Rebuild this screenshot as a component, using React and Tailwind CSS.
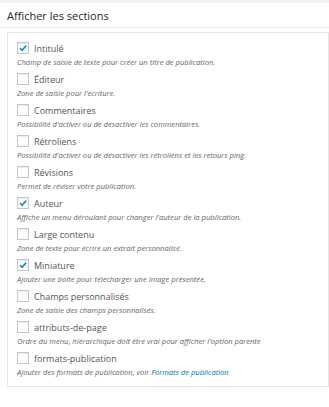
const items = [
  { label: 'Intitulé', desc: 'Champ de saisie de texte pour créer un titre de publication.', checked: true },
  { label: 'Éditeur', desc: "Zone de saisie pour l'écriture." },
  { label: 'Commentaires', desc: "Possibilité d'activer ou de désactiver les commentaires." },
  { label: 'Rétroliens', desc: "Possibilité d'activer ou de désactiver les rétroliens et les retours ping." },
  { label: 'Révisions', desc: 'Permet de réviser votre publication.' },
  { label: 'Auteur', desc: "Affiche un menu déroulant pour changer l'auteur de la publication.", checked: true },
  { label: 'Large contenu', desc: 'Zone de texte pour écrire un extrait personnalisé.' },
  { label: 'Miniature', desc: 'Ajouter une boîte pour télécharger une image présentée.', checked: true },
  { label: 'Champs personnalisés', desc: 'Zone de saisie des champs personnalisés.' },
  { label: 'attributs-de-page', desc: "Ordre du menu, hiérarchique doit être vrai pour afficher l'option parente" },
  { label: 'formats-publication', desc: 'Ajouter des formats de publication, voir ', link: 'Formats de publication' },
];

const Box = ({ checked }) => (
  <span className="w-[12px] h-[12px] border border-[#c3c6c9] bg-white shadow-[inset_0_1px_1px_rgba(0,0,0,0.08)] flex items-center justify-center shrink-0">
    {checked && (
      <svg width="10" height="10" viewBox="0 0 10 10">
        <path d="M2 5.2 L4.1 7.3 L8.2 2.6" fill="none" stroke="#1e8cbe" strokeWidth="1.7" />
      </svg>
    )}
  </span>
);

export default function App() {
  return (
    <div className="w-[329px] h-[407px] bg-white overflow-hidden font-['Open_Sans',sans-serif]">
      <div className="h-[3px] bg-[#f1f1f1]" />
      <div className="h-[25px] border-b border-[#eeeeee] px-[7px] flex items-center">
        <h2 className="text-[11px] text-[#23282d] font-normal leading-none">Afficher les sections</h2>
      </div>
      <div className="ml-[7px] mt-[4px] h-[355px] border border-[#e5e5e5] pt-[9px] pl-[9px]">
        {items.map((it) => (
          <div key={it.label} className="h-[31px]">
            <div className="flex items-center gap-[5px] h-[12px]">
              <Box checked={it.checked} />
              <span className="text-[9px] text-[#555] leading-none">{it.label}</span>
            </div>
            <p className="mt-[3px] text-[7.6px] italic text-[#666] leading-[10px] whitespace-nowrap">
              {it.desc}
              {it.link && <span className="text-[#0073aa]">{it.link}</span>}
            </p>
          </div>
        ))}
      </div>
    </div>
  );
}
